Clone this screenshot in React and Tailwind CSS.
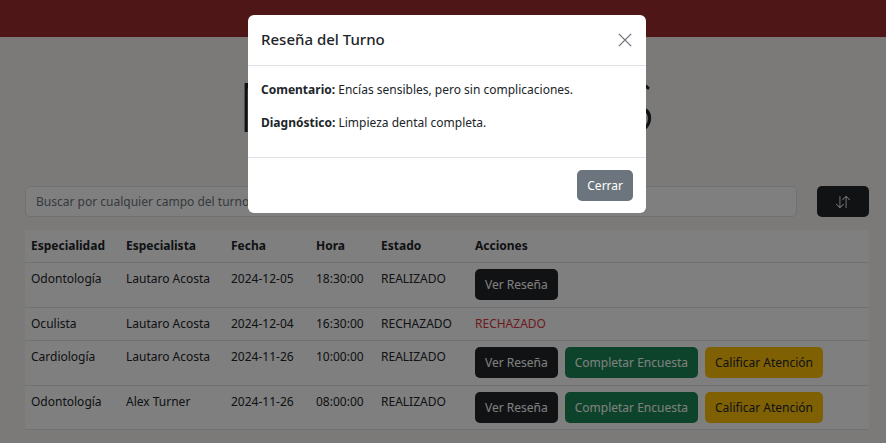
import React from 'react'

const turnos = [
  { esp: 'Odontología', medico: 'Lautaro Acosta', fecha: '2024-12-05', hora: '18:30:00', estado: 'REALIZADO', acciones: ['ver'] },
  { esp: 'Oculista', medico: 'Lautaro Acosta', fecha: '2024-12-04', hora: '16:30:00', estado: 'RECHAZADO', acciones: [] },
  { esp: 'Cardiología', medico: 'Lautaro Acosta', fecha: '2024-11-26', hora: '10:00:00', estado: 'REALIZADO', acciones: ['ver', 'encuesta', 'calificar'] },
  { esp: 'Odontología', medico: 'Alex Turner', fecha: '2024-11-26', hora: '08:00:00', estado: 'REALIZADO', acciones: ['ver', 'encuesta', 'calificar'] },
]

function SortIcon() {
  return (
    <svg width="14" height="14" viewBox="0 0 16 16" fill="currentColor">
      <path fillRule="evenodd" d="M11.5 15a.5.5 0 0 0 .5-.5V2.707l3.146 3.147a.5.5 0 0 0 .708-.708l-4-4a.5.5 0 0 0-.708 0l-4 4a.5.5 0 1 0 .708.708L11 2.707V14.5a.5.5 0 0 0 .5.5m-7-14a.5.5 0 0 1 .5.5v11.793l3.146-3.147a.5.5 0 0 1 .708.708l-4 4a.5.5 0 0 1-.708 0l-4-4a.5.5 0 0 1 .708-.708L4 13.293V1.5a.5.5 0 0 1 .5-.5" />
    </svg>
  )
}

function Acciones({ turno }) {
  if (turno.estado === 'RECHAZADO') {
    return <span className="text-[#dc3545]">RECHAZADO</span>
  }
  return (
    <div className="flex gap-[7px]">
      {turno.acciones.includes('ver') && (
        <button className="h-[31px] px-[10px] rounded-[5px] bg-[#212529] text-white">Ver Reseña</button>
      )}
      {turno.acciones.includes('encuesta') && (
        <button className="h-[31px] px-[10px] rounded-[5px] bg-[#198754] text-white">Completar Encuesta</button>
      )}
      {turno.acciones.includes('calificar') && (
        <button className="h-[31px] px-[10px] rounded-[5px] bg-[#ffc107] text-[#212529]">Calificar Atención</button>
      )}
    </div>
  )
}

export default function App() {
  return (
    <div className="relative min-h-[443px] bg-[#f6f4f0] text-[12px] leading-[19.2px] text-[#212529]" style={{ fontFamily: '"Noto Sans", sans-serif' }}>
      <nav className="h-[37px] bg-[#9c2c2c]" />

      <div className="pl-[25px] pr-[17px]">
        <h1 className="pt-[26px] h-[149px] text-center text-[68px] leading-[86px] font-light tracking-[1.5px]" style={{ fontFamily: 'Lato, sans-serif' }}>
          MIS TURNOS
        </h1>

        <div className="flex gap-[20px]">
          <input
            className="flex-1 h-[31px] px-[10px] rounded-[5px] border border-[#dee2e6] bg-white placeholder:text-[#6c757d]"
            placeholder="Buscar por cualquier campo del turno..."
          />
          <button className="w-[52px] h-[31px] rounded-[5px] bg-[#212529] text-white flex items-center justify-center">
            <SortIcon />
          </button>
        </div>

        <table className="mt-[13px] w-full bg-white text-left border-collapse">
          <thead>
            <tr className="border-b border-[#dee2e6]">
              <th className="w-[95px] px-[6px] py-[6.4px] font-bold">Especialidad</th>
              <th className="w-[105px] px-[6px] py-[6.4px] font-bold">Especialista</th>
              <th className="w-[85px] px-[6px] py-[6.4px] font-bold">Fecha</th>
              <th className="w-[65px] px-[6px] py-[6.4px] font-bold">Hora</th>
              <th className="w-[94px] px-[6px] py-[6.4px] font-bold">Estado</th>
              <th className="px-[6px] py-[6.4px] font-bold">Acciones</th>
            </tr>
          </thead>
          <tbody>
            {turnos.map((t, i) => (
              <tr key={i} className="border-b border-[#dee2e6] align-top">
                <td className="px-[6px] py-[6.4px]">{t.esp}</td>
                <td className="px-[6px] py-[6.4px]">{t.medico}</td>
                <td className="px-[6px] py-[6.4px]">{t.fecha}</td>
                <td className="px-[6px] py-[6.4px]">{t.hora}</td>
                <td className="px-[6px] py-[6.4px]">{t.estado}</td>
                <td className="px-[6px] py-[6.4px]">
                  <Acciones turno={t} />
                </td>
              </tr>
            ))}
          </tbody>
        </table>
      </div>

      {/* backdrop + modal */}
      <div className="absolute inset-0 bg-black/50" />
      <div className="absolute left-[248px] top-[15px] w-[398px] bg-white rounded-[6px]">
        <div className="h-[51px] px-[13px] flex items-center justify-between border-b border-[#dee2e6]">
          <h5 className="text-[15px] font-medium">Reseña del Turno</h5>
          <button className="w-[16px] h-[16px] flex items-center justify-center text-[#6c757d]">
            <svg width="14" height="14" viewBox="0 0 16 16" fill="none" stroke="currentColor" strokeWidth="1.6">
              <path d="M1 1l14 14M15 1L1 15" />
            </svg>
          </button>
        </div>
        <div className="px-[13px] pt-[14px] pb-[12px] border-b border-[#dee2e6]">
          <p className="mb-[14px]"><span className="font-bold">Comentario:</span> Encías sensibles, pero sin complicaciones.</p>
          <p className="mb-[13px]"><span className="font-bold">Diagnóstico:</span> Limpieza dental completa.</p>
        </div>
        <div className="px-[13px] py-[12px] flex justify-end">
          <button className="h-[31px] px-[10px] rounded-[5px] bg-[#6c757d] text-white">Cerrar</button>
        </div>
      </div>
    </div>
  )
}
